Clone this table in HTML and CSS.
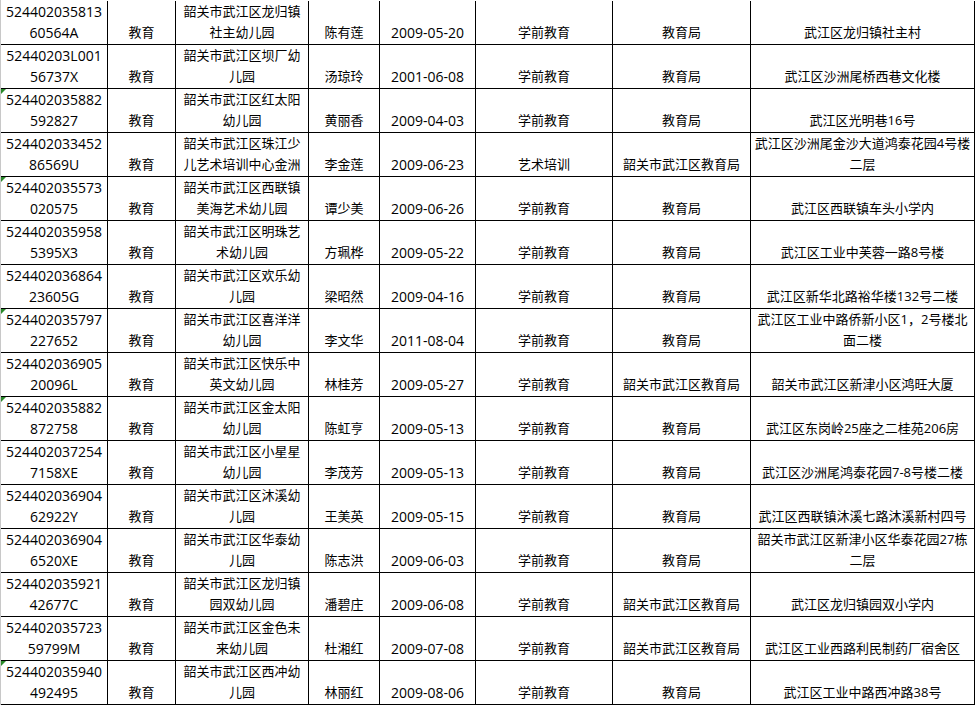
FILE: index.html
```html
<!DOCTYPE html>
<html lang="zh-CN">
<head>
<meta charset="utf-8">
<title>韶关市武江区幼儿园登记表</title>
<link rel="stylesheet" href="styles.css">
</head>
<body>
<div class="sheet">
  <div class="row">
    <div class="c c1 num"><p class="t">524402035813</p><p class="t">60564A</p></div>
    <div class="c c2"><p class="t">教育</p></div>
    <div class="c c3"><p class="t">韶关市武江区龙归镇</p><p class="t">社主幼儿园</p></div>
    <div class="c c4"><p class="t">陈有莲</p></div>
    <div class="c c5 num"><p class="t">2009-05-20</p></div>
    <div class="c c6"><p class="t">学前教育</p></div>
    <div class="c c7"><p class="t">教育局</p></div>
    <div class="c c8"><p class="t">武江区龙归镇社主村</p></div>
  </div>
  <div class="row">
    <div class="c c1 num"><p class="t">52440203L001</p><p class="t">56737X</p></div>
    <div class="c c2"><p class="t">教育</p></div>
    <div class="c c3"><p class="t">韶关市武江区坝厂幼</p><p class="t">儿园</p></div>
    <div class="c c4"><p class="t">汤琼玲</p></div>
    <div class="c c5 num"><p class="t">2001-06-08</p></div>
    <div class="c c6"><p class="t">学前教育</p></div>
    <div class="c c7"><p class="t">教育局</p></div>
    <div class="c c8"><p class="t">武江区沙洲尾桥西巷文化楼</p></div>
  </div>
  <div class="row">
    <div class="c c1 num flag"><p class="t">524402035882</p><p class="t">592827</p></div>
    <div class="c c2"><p class="t">教育</p></div>
    <div class="c c3"><p class="t">韶关市武江区红太阳</p><p class="t">幼儿园</p></div>
    <div class="c c4"><p class="t">黄丽香</p></div>
    <div class="c c5 num"><p class="t">2009-04-03</p></div>
    <div class="c c6"><p class="t">学前教育</p></div>
    <div class="c c7"><p class="t">教育局</p></div>
    <div class="c c8"><p class="t">武江区光明巷16号</p></div>
  </div>
  <div class="row">
    <div class="c c1 num"><p class="t">524402033452</p><p class="t">86569U</p></div>
    <div class="c c2"><p class="t">教育</p></div>
    <div class="c c3"><p class="t">韶关市武江区珠江少</p><p class="t">儿艺术培训中心金洲</p></div>
    <div class="c c4"><p class="t">李金莲</p></div>
    <div class="c c5 num"><p class="t">2009-06-23</p></div>
    <div class="c c6"><p class="t">艺术培训</p></div>
    <div class="c c7"><p class="t">韶关市武江区教育局</p></div>
    <div class="c c8"><p class="t">武江区沙洲尾金沙大道鸿泰花园4号楼</p><p class="t">二层</p></div>
  </div>
  <div class="row">
    <div class="c c1 num flag"><p class="t">524402035573</p><p class="t">020575</p></div>
    <div class="c c2"><p class="t">教育</p></div>
    <div class="c c3"><p class="t">韶关市武江区西联镇</p><p class="t">美海艺术幼儿园</p></div>
    <div class="c c4"><p class="t">谭少美</p></div>
    <div class="c c5 num"><p class="t">2009-06-26</p></div>
    <div class="c c6"><p class="t">学前教育</p></div>
    <div class="c c7"><p class="t">教育局</p></div>
    <div class="c c8"><p class="t">武江区西联镇车头小学内</p></div>
  </div>
  <div class="row">
    <div class="c c1 num"><p class="t">524402035958</p><p class="t">5395X3</p></div>
    <div class="c c2"><p class="t">教育</p></div>
    <div class="c c3"><p class="t">韶关市武江区明珠艺</p><p class="t">术幼儿园</p></div>
    <div class="c c4"><p class="t">方珮桦</p></div>
    <div class="c c5 num"><p class="t">2009-05-22</p></div>
    <div class="c c6"><p class="t">学前教育</p></div>
    <div class="c c7"><p class="t">教育局</p></div>
    <div class="c c8"><p class="t">武江区工业中芙蓉一路8号楼</p></div>
  </div>
  <div class="row">
    <div class="c c1 num"><p class="t">524402036864</p><p class="t">23605G</p></div>
    <div class="c c2"><p class="t">教育</p></div>
    <div class="c c3"><p class="t">韶关市武江区欢乐幼</p><p class="t">儿园</p></div>
    <div class="c c4"><p class="t">梁昭然</p></div>
    <div class="c c5 num"><p class="t">2009-04-16</p></div>
    <div class="c c6"><p class="t">学前教育</p></div>
    <div class="c c7"><p class="t">教育局</p></div>
    <div class="c c8"><p class="t">武江区新华北路裕华楼132号二楼</p></div>
  </div>
  <div class="row">
    <div class="c c1 num flag"><p class="t">524402035797</p><p class="t">227652</p></div>
    <div class="c c2"><p class="t">教育</p></div>
    <div class="c c3"><p class="t">韶关市武江区喜洋洋</p><p class="t">幼儿园</p></div>
    <div class="c c4"><p class="t">李文华</p></div>
    <div class="c c5 num"><p class="t">2011-08-04</p></div>
    <div class="c c6"><p class="t">学前教育</p></div>
    <div class="c c7"><p class="t">教育局</p></div>
    <div class="c c8"><p class="t">武江区工业中路侨新小区1，2号楼北</p><p class="t">面二楼</p></div>
  </div>
  <div class="row">
    <div class="c c1 num"><p class="t">524402036905</p><p class="t">20096L</p></div>
    <div class="c c2"><p class="t">教育</p></div>
    <div class="c c3"><p class="t">韶关市武江区快乐中</p><p class="t">英文幼儿园</p></div>
    <div class="c c4"><p class="t">林桂芳</p></div>
    <div class="c c5 num"><p class="t">2009-05-27</p></div>
    <div class="c c6"><p class="t">学前教育</p></div>
    <div class="c c7"><p class="t">韶关市武江区教育局</p></div>
    <div class="c c8"><p class="t">韶关市武江区新津小区鸿旺大厦</p></div>
  </div>
  <div class="row">
    <div class="c c1 num flag"><p class="t">524402035882</p><p class="t">872758</p></div>
    <div class="c c2"><p class="t">教育</p></div>
    <div class="c c3"><p class="t">韶关市武江区金太阳</p><p class="t">幼儿园</p></div>
    <div class="c c4"><p class="t">陈虹亨</p></div>
    <div class="c c5 num"><p class="t">2009-05-13</p></div>
    <div class="c c6"><p class="t">学前教育</p></div>
    <div class="c c7"><p class="t">教育局</p></div>
    <div class="c c8"><p class="t">武江区东岗岭25座之二桂苑206房</p></div>
  </div>
  <div class="row">
    <div class="c c1 num"><p class="t">524402037254</p><p class="t">7158XE</p></div>
    <div class="c c2"><p class="t">教育</p></div>
    <div class="c c3"><p class="t">韶关市武江区小星星</p><p class="t">幼儿园</p></div>
    <div class="c c4"><p class="t">李茂芳</p></div>
    <div class="c c5 num"><p class="t">2009-05-13</p></div>
    <div class="c c6"><p class="t">学前教育</p></div>
    <div class="c c7"><p class="t">教育局</p></div>
    <div class="c c8"><p class="t">武江区沙洲尾鸿泰花园7-8号楼二楼</p></div>
  </div>
  <div class="row">
    <div class="c c1 num"><p class="t">524402036904</p><p class="t">62922Y</p></div>
    <div class="c c2"><p class="t">教育</p></div>
    <div class="c c3"><p class="t">韶关市武江区沐溪幼</p><p class="t">儿园</p></div>
    <div class="c c4"><p class="t">王美英</p></div>
    <div class="c c5 num"><p class="t">2009-05-15</p></div>
    <div class="c c6"><p class="t">学前教育</p></div>
    <div class="c c7"><p class="t">教育局</p></div>
    <div class="c c8"><p class="t">武江区西联镇沐溪七路沐溪新村四号</p></div>
  </div>
  <div class="row">
    <div class="c c1 num"><p class="t">524402036904</p><p class="t">6520XE</p></div>
    <div class="c c2"><p class="t">教育</p></div>
    <div class="c c3"><p class="t">韶关市武江区华泰幼</p><p class="t">儿园</p></div>
    <div class="c c4"><p class="t">陈志洪</p></div>
    <div class="c c5 num"><p class="t">2009-06-03</p></div>
    <div class="c c6"><p class="t">学前教育</p></div>
    <div class="c c7"><p class="t">教育局</p></div>
    <div class="c c8"><p class="t">韶关市武江区新津小区华泰花园27栋</p><p class="t">二层</p></div>
  </div>
  <div class="row">
    <div class="c c1 num"><p class="t">524402035921</p><p class="t">42677C</p></div>
    <div class="c c2"><p class="t">教育</p></div>
    <div class="c c3"><p class="t">韶关市武江区龙归镇</p><p class="t">园双幼儿园</p></div>
    <div class="c c4"><p class="t">潘碧庄</p></div>
    <div class="c c5 num"><p class="t">2009-06-08</p></div>
    <div class="c c6"><p class="t">学前教育</p></div>
    <div class="c c7"><p class="t">韶关市武江区教育局</p></div>
    <div class="c c8"><p class="t">武江区龙归镇园双小学内</p></div>
  </div>
  <div class="row">
    <div class="c c1 num"><p class="t">524402035723</p><p class="t">59799M</p></div>
    <div class="c c2"><p class="t">教育</p></div>
    <div class="c c3"><p class="t">韶关市武江区金色未</p><p class="t">来幼儿园</p></div>
    <div class="c c4"><p class="t">杜湘红</p></div>
    <div class="c c5 num"><p class="t">2009-07-08</p></div>
    <div class="c c6"><p class="t">学前教育</p></div>
    <div class="c c7"><p class="t">韶关市武江区教育局</p></div>
    <div class="c c8"><p class="t">武江区工业西路利民制药厂宿舍区</p></div>
  </div>
  <div class="row">
    <div class="c c1 num flag"><p class="t">524402035940</p><p class="t">492495</p></div>
    <div class="c c2"><p class="t">教育</p></div>
    <div class="c c3"><p class="t">韶关市武江区西冲幼</p><p class="t">儿园</p></div>
    <div class="c c4"><p class="t">林丽红</p></div>
    <div class="c c5 num"><p class="t">2009-08-06</p></div>
    <div class="c c6"><p class="t">学前教育</p></div>
    <div class="c c7"><p class="t">教育局</p></div>
    <div class="c c8"><p class="t">武江区工业中路西冲路38号</p></div>
  </div>
</div>
</body>
</html>
```

FILE: styles.css
```css
html, body {
  margin: 0;
  padding: 0;
  background: #ffffff;
  overflow: hidden;
}

.sheet {
  display: flex;
  flex-direction: column;
  padding-top: 1px;
  border-left: 1px solid #c8c8c8;
  width: 974px;
  font-family: "Open Sans", "Noto Sans CJK SC", sans-serif;
  font-size: 13px;
  color: #000000;
}

.row {
  display: flex;
  height: 44px;
}

.c {
  position: relative;
  box-sizing: border-box;
  flex: none;
  height: 44px;
  border-right: 1px solid #000000;
  border-bottom: 1px solid #000000;
  display: flex;
  flex-direction: column;
  justify-content: flex-end;
  align-items: center;
  text-align: center;
  padding-bottom: 1px;
  overflow: hidden;
}

.t {
  display: block;
  flex: none;
  margin: 0;
  text-align: center;
  white-space: nowrap;
  line-height: 21px;
}

.c1 { width: 107px; }
.c2 { width: 68px; }
.c3 { width: 133px; }
.c4 { width: 71px; }
.c5 { width: 96px; }
.c6 { width: 137px; }
.c7 { width: 138px; }
.c8 { width: 224px; }

.num {
  font-size: 14px;
}

.flag::before {
  content: "";
  position: absolute;
  left: 0;
  top: 0;
  width: 0;
  height: 0;
  border-top: 5px solid #2a8a2a;
  border-right: 5px solid transparent;
}
```
